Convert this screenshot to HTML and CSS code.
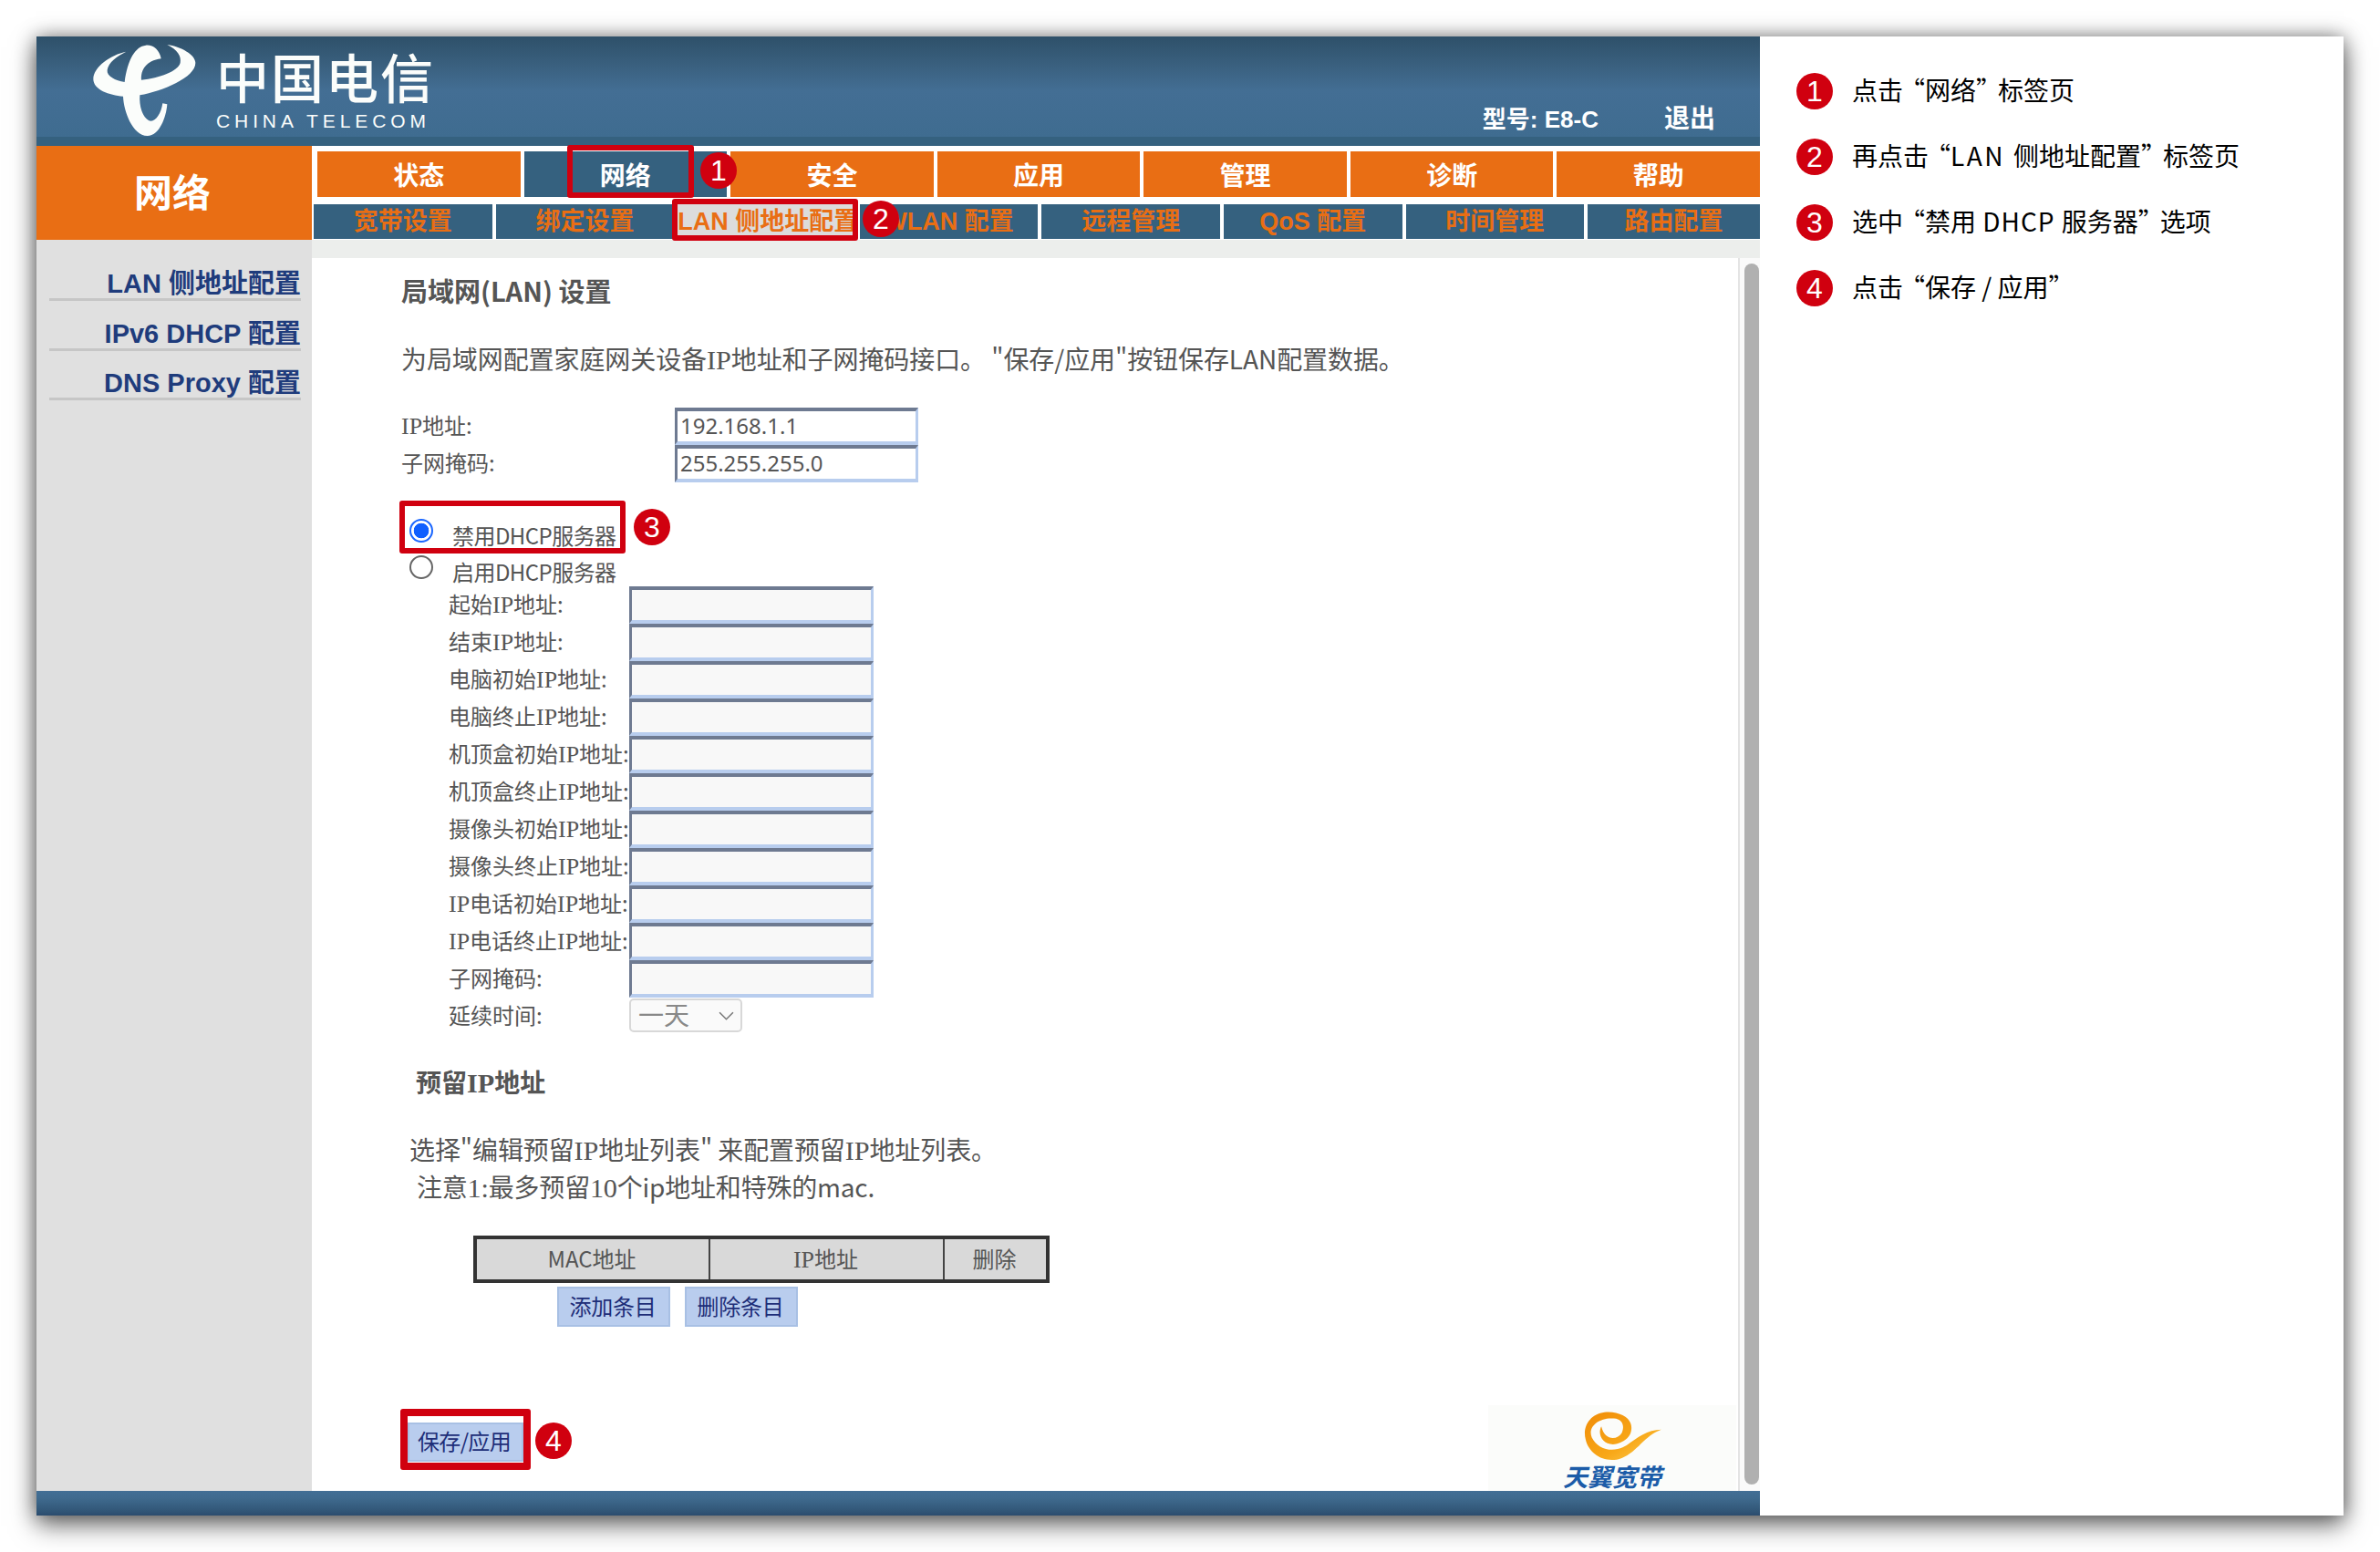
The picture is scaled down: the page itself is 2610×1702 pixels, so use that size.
FILE: index.html
```html
<!DOCTYPE html>
<html lang="zh-CN">
<head>
<meta charset="utf-8">
<title>网络 - LAN 侧地址配置</title>
<link rel="stylesheet" href="styles.css">
</head>
<body>
<div class="window">
  <div class="router">
    <header class="top">
      <div class="brand">
        <svg class="mark" viewBox="0 0 390 330"><path fill="#fbfdfb" d="M130 35C80 45 22 85 22 125C22 160 75 178 120 182C122 230 150 310 200 312C240 312 262 250 265 208L250 205C245 240 225 270 205 262C185 252 172 215 175 178C250 165 358 120 358 72C358 45 310 18 265 12C300 30 312 50 308 72C300 100 240 122 180 128C178 95 195 65 245 58C240 30 220 12 195 14C160 18 135 60 125 135C95 130 65 115 68 95C72 70 100 50 130 35Z"/></svg>
        <div class="brand-text">
          <div class="brand-cn">中国电信</div>
          <div class="brand-en">CHINA TELECOM</div>
        </div>
      </div>
      <div class="top-links"><span>型号: E8-C</span><span>退出</span></div>
    </header>
    <div class="navrow">
      <div class="section-title">网络</div>
      <nav class="navs">
        <div class="tabs">
          <a class="tab">状态</a><a class="tab on">网络</a><a class="tab">安全</a><a class="tab">应用</a><a class="tab">管理</a><a class="tab">诊断</a><a class="tab">帮助</a>
        </div>
        <div class="subtabs">
          <a class="subtab">宽带设置</a><a class="subtab">绑定设置</a><a class="subtab on">LAN 侧地址配置</a><a class="subtab">WLAN 配置</a><a class="subtab">远程管理</a><a class="subtab">QoS 配置</a><a class="subtab">时间管理</a><a class="subtab">路由配置</a>
        </div>
      </nav>
    </div>
    <div class="bodyrow">
      <aside class="side">
        <a class="side-item">LAN 侧地址配置</a>
        <a class="side-item">IPv6 DHCP 配置</a>
        <a class="side-item">DNS Proxy 配置</a>
      </aside>
      <div class="pane">
        <div class="band"></div>
        <div class="scrollarea">
          <main class="content">
            <h1 class="h">局域网(LAN) 设置</h1>
            <p class="lead">为局域网配置家庭网关设备<span class="s">IP</span>地址和子网掩码接口。 "保存/应用"按钮保存LAN配置数据。</p>
            <div class="pair">
              <label><span class="s">IP</span>地址:</label><input class="field" value="192.168.1.1">
              <label>子网掩码:</label><input class="field" value="255.255.255.0">
            </div>
            <div class="radios">
              <label class="radio"><input type="radio" name="dhcp" checked><span>禁用DHCP服务器</span></label>
              <label class="radio"><input type="radio" name="dhcp"><span>启用DHCP服务器</span></label>
            </div>
            <div class="dhcp">
              <label>起始<span class="s">IP</span>地址:</label><input class="field off">
              <label>结束<span class="s">IP</span>地址:</label><input class="field off">
              <label>电脑初始<span class="s">IP</span>地址:</label><input class="field off">
              <label>电脑终止<span class="s">IP</span>地址:</label><input class="field off">
              <label>机顶盒初始<span class="s">IP</span>地址:</label><input class="field off">
              <label>机顶盒终止<span class="s">IP</span>地址:</label><input class="field off">
              <label>摄像头初始<span class="s">IP</span>地址:</label><input class="field off">
              <label>摄像头终止<span class="s">IP</span>地址:</label><input class="field off">
              <label><span class="s">IP</span>电话初始<span class="s">IP</span>地址:</label><input class="field off">
              <label><span class="s">IP</span>电话终止<span class="s">IP</span>地址:</label><input class="field off">
              <label>子网掩码:</label><input class="field off">
              <label>延续时间:</label>
              <div class="sel"><span>一天</span><svg viewBox="0 0 16 10"><path d="M1 1l7 7 7-7" fill="none" stroke="#777" stroke-width="1.4"/></svg></div>
            </div>
            <h2 class="h2">预留<span class="s">IP</span>地址</h2>
            <p class="note n1">选择"编辑预留<span class="s">IP</span>地址列表" 来配置预留<span class="s">IP</span>地址列表。</p>
            <p class="note n2">注意<span class="s">1:</span>最多预留<span class="s">10</span>个ip地址和特殊的mac.</p>
            <table class="tbl">
              <tr><td class="c1">MAC地址</td><td class="c1"><span class="s">IP</span>地址</td><td class="c2">删除</td></tr>
            </table>
            <div class="actions"><button class="btn">添加条目</button><button class="btn">删除条目</button></div>
            <div class="foot">
              <button class="btn save">保存/应用</button>
              <div class="tianyi">
                <svg class="swirl" viewBox="120 36 248 160"><defs><linearGradient id="g" x1="0" y1="0" x2="1" y2="1"><stop offset="0" stop-color="#f08c08"/><stop offset=".6" stop-color="#f8a818"/><stop offset="1" stop-color="#fdd058"/></linearGradient></defs><path fill="url(#g)" d="M270 95C275 55 225 35 185 40C140 45 115 85 125 125C135 175 190 205 240 185C290 165 310 115 365 95C320 95 290 120 255 145C215 170 165 160 145 120C130 85 170 55 215 60C240 62 250 80 240 105C225 130 185 130 175 85C160 115 185 150 225 140C255 130 268 115 270 95Z"/></svg>
                <div class="tianyi-text">天翼宽带</div>
              </div>
            </div>
          </main>
          <div class="scroll"><div class="thumb"></div></div>
        </div>
      </div>
    </div>
    <div class="bottom"></div>
  </div>
  <aside class="steps">
    <div class="step"><b class="dot">1</b><span class="txt">点击<i class="qo">“</i>网络<i class="qc">”</i>标签页</span></div>
    <div class="step"><b class="dot">2</b><span class="txt">再点击<i class="qo">“</i><span class="lat wide">LAN </span>侧地址配置<i class="qc">”</i>标签页</span></div>
    <div class="step"><b class="dot">3</b><span class="txt">选中<i class="qo">“</i>禁用<span class="lat"> DHCP </span>服务器<i class="qc">”</i>选项</span></div>
    <div class="step"><b class="dot">4</b><span class="txt">点击<i class="qo">“</i>保存 / 应用<i class="qc">”</i></span></div>
  </aside>
  <i class="box b1"></i><b class="dot pin p1">1</b>
  <i class="box b2"></i><b class="dot pin p2">2</b>
  <i class="box b3"></i><b class="dot pin p3">3</b>
  <i class="box b4"></i><b class="dot pin p4">4</b>
</div>
</body>
</html>
```
FILE: styles.css
```css
* { box-sizing: border-box; }
html, body { margin: 0; height: 100%; background: #fff; }
body { padding: 40px; font-family: "Noto Sans CJK SC", "Liberation Sans", sans-serif; color: #555; }
.window { position: relative; display: flex; width: 2530px; height: 1622px; background: #fff; box-shadow: 0 0 20px rgba(0,0,0,.42), 0 11px 26px rgba(0,0,0,.5); }
.router { width: 1890px; display: flex; flex-direction: column; flex: none; }
.top { height: 120px; display: flex; justify-content: space-between; background: linear-gradient(#2e5069 0, #3a607f 32px, #436e94 60px, #3f6c90 110px, #35617f 110px); }
.brand { display: flex; padding: 10px 0 0 62px; }
.mark { width: 130px; height: 110px; margin-top: -5px; margin-left: -7px; }
.brand-text { margin-left: 12px; color: #fbfdfb; }
.brand-cn { font-size: 58px; line-height: 66px; letter-spacing: 2px; width: 240px; font-weight: 500; }
.brand-en { font-family: "Liberation Sans", sans-serif; font-size: 21px; line-height: 20px; letter-spacing: 4.9px; white-space: nowrap; margin-top: 7px; }
.top-links { display: flex; gap: 72px; padding: 73px 49px 0 0; color: #fff; font-weight: 700; font-size: 26px; line-height: 36px; font-family: "Liberation Sans", "Noto Sans CJK SC", sans-serif; }
.top-links span:last-child { font-size: 28px; }
.navrow { display: flex; height: 103px; background: #fff; }
.section-title { width: 302px; flex: none; background: #e96e14; color: #fff; font-size: 42px; font-weight: 700; text-align: center; line-height: 98px; padding-right: 4px; }
.navs { flex: 1; display: flex; flex-direction: column; }
.tabs { display: grid; grid-template-columns: repeat(7, 1fr); gap: 4px; margin: 6px 0 0 6px; height: 50px; }
.tab { background: #e96e14; color: #fff; font-size: 28px; font-weight: 700; line-height: 50px; text-align: center; }
.tab.on { background: #35617f; }
.subtabs { display: grid; grid-template-columns: repeat(7, 195.6px) 1fr; gap: 4px; margin: 8px 0 0 2px; height: 37px; }
.subtab { background: #35617f; color: #e96e14; font-size: 27px; font-weight: 700; line-height: 38px; text-align: center; white-space: nowrap; font-family: "Liberation Sans", "Noto Sans CJK SC", sans-serif; }
.subtab.on { background: #dcdcdc; }
.bodyrow { flex: 1; display: flex; min-height: 0; }
.side { width: 302px; flex: none; background: #e0e0e0; padding: 29px 12px 0 14px; display: flex; flex-direction: column; gap: 16.5px; }
.side-item { height: 38px; line-height: 38px; border-bottom: 3px solid #c6c6c6; color: #1f3c7c; font-size: 29px; font-weight: 700; text-align: right; white-space: nowrap; font-family: "Liberation Sans", "Noto Sans CJK SC", sans-serif; }
.pane { flex: 1; display: flex; flex-direction: column; min-width: 0; }
.band { height: 20px; background: #eceeec; flex: none; }
.scrollarea { flex: 1; display: flex; min-height: 0; }
.content { flex: 1; padding: 15px 0 0 98px; background: #fff; display: flex; flex-direction: column; }
.scroll { width: 24px; flex: none; border-left: 2px solid #e4e4e4; background: #fafafa; padding: 6px 1px 7px 5px; }
.thumb { height: 100%; background: #b0b0b0; border-radius: 9px; }
.h { margin: 0; font-size: 29px; line-height: 40px; height: 40px; font-weight: 700; }
.lead { margin: 35px 0 0; font-size: 28px; line-height: 40px; height: 40px; white-space: nowrap; letter-spacing: -.08px; }
.s { font-family: "Liberation Serif", serif; font-size: 1.08em; line-height: 1; }
.pair { margin-top: 34px; display: grid; grid-template-columns: 300px 267px; grid-auto-rows: 41px; font-size: 24px; line-height: 38px; }
.field { width: 100%; height: 41px; border-style: solid; border-width: 4px 3px; border-color: #6e7a91 #b8cdee #b8cdee #6e7a91; background: #fff; padding: 0 3px 2px; font: 24px/1 "Noto Sans", sans-serif; color: #555; outline: 0; }
.field.off { background: #f8f8f8; }
.radios { margin-top: 33px; display: flex; flex-direction: column; }
.radio { height: 40px; display: flex; font-size: 24px; line-height: 50px; letter-spacing: -.55px; }
.radio input { appearance: none; width: 26px; height: 26px; margin: 7px 21px 0 9px; flex: none; border: 2px solid #666; border-radius: 50%; background: #fff; }
.radio input:checked { border-color: #1a66ff; background: radial-gradient(circle, #0f5fff 0 8px, #fff 8.6px); }
.dhcp { margin: 1px 0 0 52px; display: grid; grid-template-columns: 198px 268px; grid-auto-rows: 41px; font-size: 24px; line-height: 38px; }
.dhcp label { white-space: nowrap; }
.sel { position: relative; width: 124px; height: 37px; margin-top: 1px; border: 2px solid #d8d8d8; border-radius: 5px; background: #fafafa; font-size: 28px; line-height: 30px; color: #888; padding-left: 8px; }
.sel svg { position: absolute; right: 7px; top: 12px; width: 17px; height: 11px; }
.h2 { margin: 31px 0 0 16px; font-size: 28px; line-height: 40px; height: 40px; font-weight: 700; }
.note { margin: 0; font-size: 28px; line-height: 41px; height: 41px; white-space: nowrap; }
.n1 { margin: 34px 0 0 9px; letter-spacing: -.1px; }
.n2 { margin-left: 17px; letter-spacing: -.2px; }
.tbl { margin: 33px 0 0 79px; width: 632px; height: 53px; border-collapse: collapse; border: 4px solid #333; font-size: 24px; table-layout: fixed; background: #d9d9d9; }
.tbl td { border: 2px solid #444; text-align: center; padding: 0 2px 3px 0; color: #555; }
.tbl .c1 { width: 257px; }
.actions { margin: 4px 0 0 171px; display: flex; gap: 16px; }
.btn { height: 44px; width: 124px; border: 2px solid #a8c0e4; background: #b9cdee; color: #1e2e78; font: 24px/1 "Noto Sans CJK SC", sans-serif; padding: 0 2px 3px 0; letter-spacing: -.2px; }
.foot { margin-top: 86px; height: 94px; display: flex; justify-content: space-between; align-items: flex-start; padding-right: 2px; }
.save { width: 127px; height: 43px; margin: 19px 0 0 7px; letter-spacing: -.7px; padding: 0 3px 3px 0; }
.tianyi { width: 272px; height: 94px; background: #fbfcfa; display: flex; flex-direction: column; align-items: center; padding: 6px 0 0 0; }
.swirl { width: 86px; height: 56px; flex: none; margin-left: 24px; }
.tianyi-text { font-size: 27px; line-height: 26px; margin-top: 3px; font-weight: 700; font-style: italic; color: #1c5ca8; }
.bottom { height: 27px; flex: none; background: linear-gradient(#426e95, #3f6a8e 30%, #33597a 75%, #2b4c6e); }
.steps { flex: 1; padding: 40px 0 0 40px; display: flex; flex-direction: column; gap: 32px; background: #fff; }
.step { display: flex; align-items: center; gap: 21px; height: 40px; color: #000; font-size: 28px; white-space: nowrap; }
.txt { margin-top: -5px; }
.qo, .qc { font-style: normal; }
.qo { margin-left: -4px; }
.qc { margin-right: -4px; }
.lat { letter-spacing: 1px; }
.lat.wide { letter-spacing: 2.5px; }
.dot { width: 40px; height: 40px; border-radius: 50%; background: #d0000f; color: #fff; font: 32px/40px "Liberation Sans", sans-serif; text-align: center; flex: none; }
.pin { position: absolute; }
.p1 { left: 728px; top: 127px; }
.p2 { left: 906px; top: 180px; }
.p3 { left: 655px; top: 518px; }
.p4 { left: 547px; top: 1520px; }
.box { position: absolute; border: 6px solid #d0000f; border-radius: 3px; }
.b1 { left: 582px; top: 119px; width: 139px; height: 58px; }
.b2 { left: 697px; top: 178px; width: 204px; height: 46px; }
.b3 { left: 398px; top: 509px; width: 248px; height: 58px; }
.b4 { left: 399px; top: 1505px; width: 143px; height: 67px; border-width: 8px; }
```
